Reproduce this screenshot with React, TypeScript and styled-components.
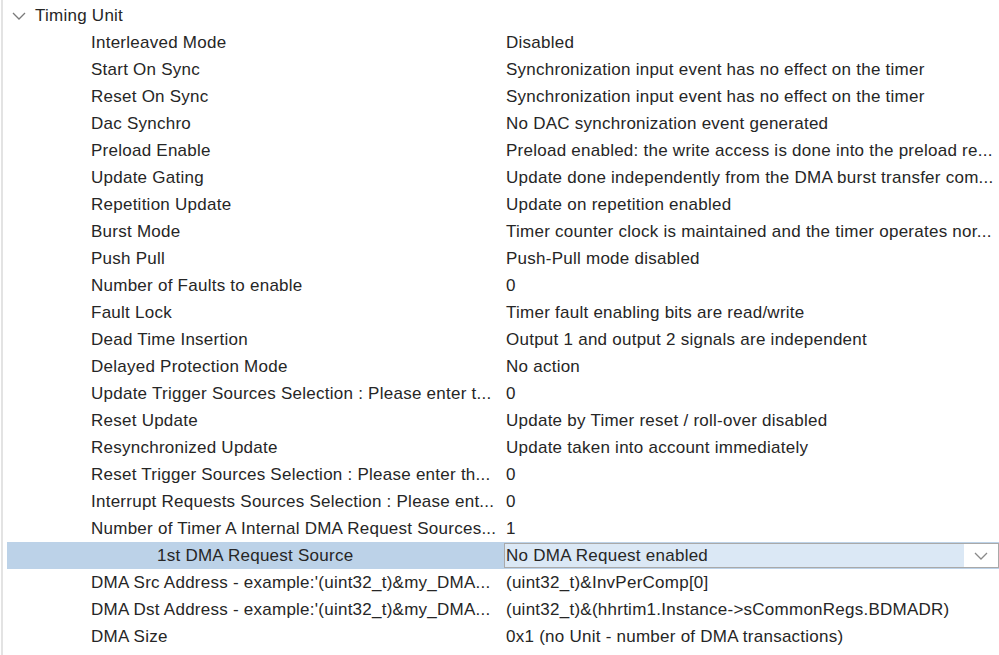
import React from "react";
import styled, { createGlobalStyle } from "styled-components";

const Global = createGlobalStyle`
  html, body { margin: 0; padding: 0; background: #ffffff; }
  body { font-family: "Liberation Sans", Arial, sans-serif; }
`;

const Panel = styled.div`
  width: 998px;
  height: 655px;
  box-sizing: border-box;
  border-left: 2px solid #e3e3e3;
  margin-left: 1px;
  padding-top: 2px;
  overflow: hidden;
  color: #262626;
  font-size: 17px;
  letter-spacing: 0.25px;
`;

const GroupHeader = styled.div`
  height: 27px;
  display: flex;
  align-items: center;
  padding-left: 9px;
  gap: 9px;
`;

const Row = styled.div<{ $selected?: boolean }>`
  height: 27px;
  display: grid;
  grid-template-columns: 497px 1fr;
  align-items: center;
  margin-left: 4px;
  background: ${(p) => (p.$selected ? "#bcd2e8" : "transparent")};
`;

const Label = styled.div<{ $indent?: number }>`
  padding-left: ${(p) => 84 + (p.$indent ?? 0)}px;
  white-space: nowrap;
  overflow: hidden;
`;

const Value = styled.div`
  padding-left: 2px;
  white-space: nowrap;
  overflow: hidden;
`;

const Combo = styled.div`
  height: 25px;
  box-sizing: border-box;
  border: 1px solid #a9a9a9;
  background: #dbe8f5;
  display: flex;
  align-items: center;
`;

const ComboText = styled.span`
  flex: 1;
  padding-left: 1px;
  white-space: nowrap;
`;

const ComboButton = styled.span`
  width: 34px;
  height: 100%;
  background: #ffffff;
  display: flex;
  align-items: center;
  justify-content: center;
`;

const Chevron = ({ color = "#8a8a8a" }: { color?: string }) => (
  <svg width="14" height="8" viewBox="0 0 14 8">
    <path d="M1 1 L7 7 L13 1" fill="none" stroke={color} strokeWidth="1.3" />
  </svg>
);

const rows: [string, string][] = [
  ["Interleaved Mode", "Disabled"],
  ["Start On Sync", "Synchronization input event has no effect on the timer"],
  ["Reset On Sync", "Synchronization input event has no effect on the timer"],
  ["Dac Synchro", "No DAC synchronization event generated"],
  ["Preload Enable", "Preload enabled: the write access is done into the preload re..."],
  ["Update Gating", "Update done independently from the DMA burst transfer com..."],
  ["Repetition Update", "Update on repetition enabled"],
  ["Burst Mode", "Timer counter clock is maintained and the timer operates nor..."],
  ["Push Pull", "Push-Pull mode disabled"],
  ["Number of Faults to enable", "0"],
  ["Fault Lock", "Timer fault enabling bits are read/write"],
  ["Dead Time Insertion", "Output 1 and output 2 signals are independent"],
  ["Delayed Protection Mode", "No action"],
  ["Update Trigger Sources Selection : Please enter t...", "0"],
  ["Reset Update", "Update by Timer reset / roll-over disabled"],
  ["Resynchronized Update", "Update taken into account immediately"],
  ["Reset Trigger Sources Selection : Please enter th...", "0"],
  ["Interrupt Requests Sources Selection : Please ent...", "0"],
  ["Number of Timer A Internal DMA Request Sources...", "1"],
];

const after: [string, string][] = [
  ["DMA Src Address - example:'(uint32_t)&my_DMA...", "(uint32_t)&InvPerComp[0]"],
  ["DMA Dst Address - example:'(uint32_t)&my_DMA...", "(uint32_t)&(hhrtim1.Instance->sCommonRegs.BDMADR)"],
  ["DMA Size", "0x1 (no Unit - number of DMA transactions)"],
];

export default function App() {
  return (
    <>
      <Global />
      <Panel>
        <GroupHeader>
          <Chevron color="#7a7a7a" />
          <span>Timing Unit</span>
        </GroupHeader>
        {rows.map(([l, v]) => (
          <Row key={l}>
            <Label>{l}</Label>
            <Value>{v}</Value>
          </Row>
        ))}
        <Row $selected>
          <Label $indent={66}>1st DMA Request Source</Label>
          <Combo>
            <ComboText>No DMA Request enabled</ComboText>
            <ComboButton>
              <Chevron />
            </ComboButton>
          </Combo>
        </Row>
        {after.map(([l, v]) => (
          <Row key={l}>
            <Label>{l}</Label>
            <Value>{v}</Value>
          </Row>
        ))}
      </Panel>
    </>
  );
}
